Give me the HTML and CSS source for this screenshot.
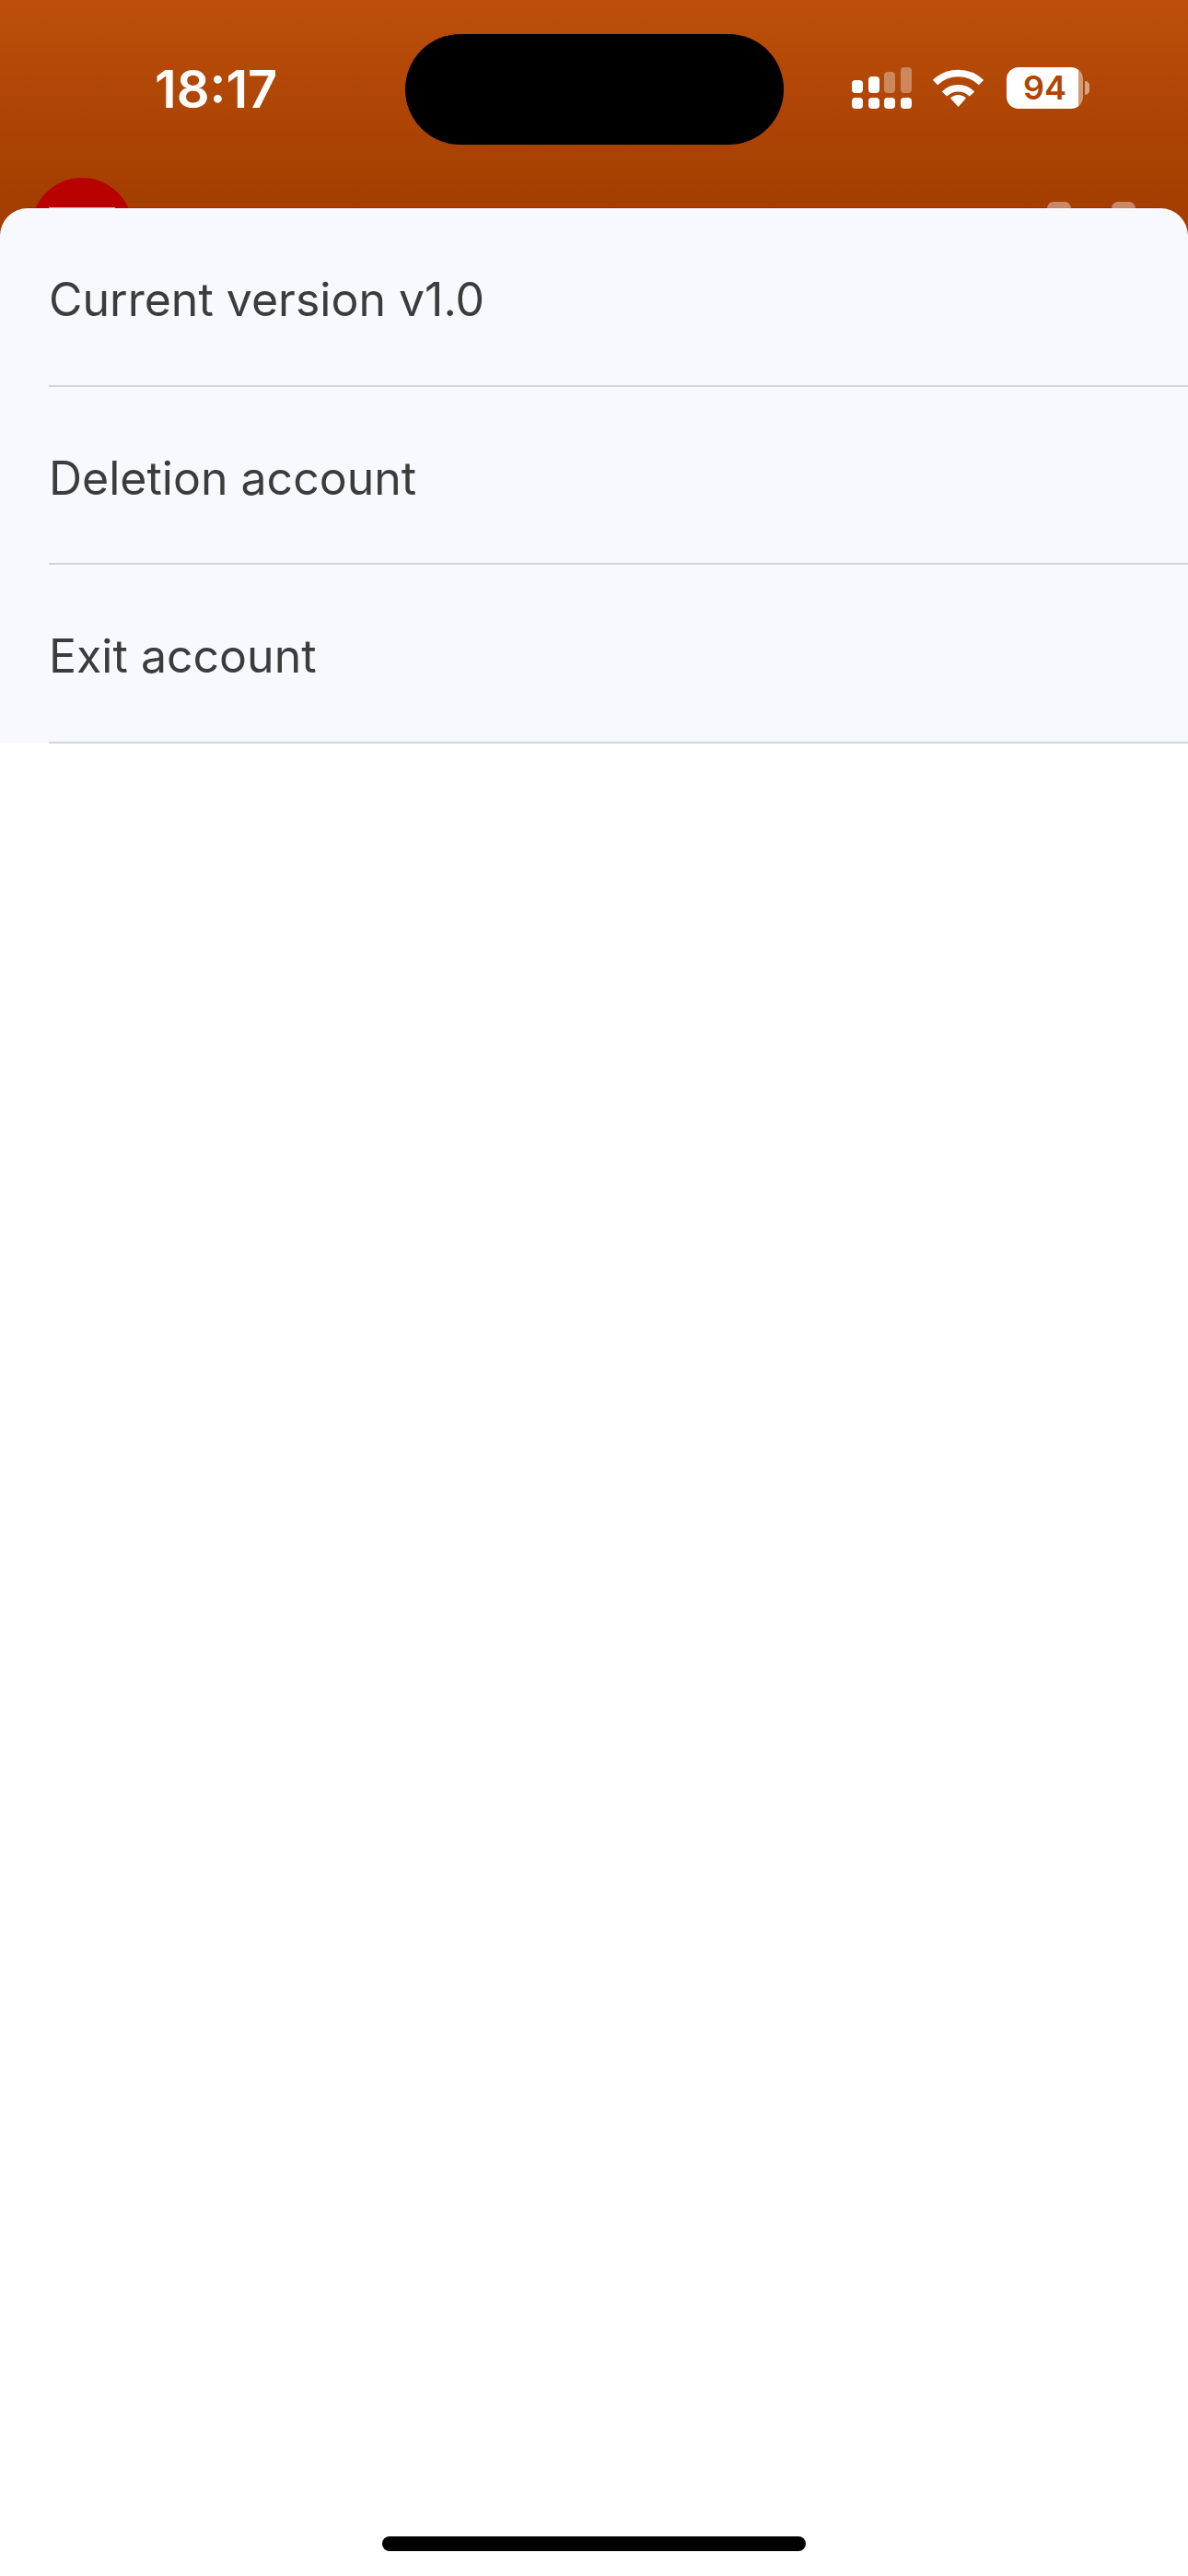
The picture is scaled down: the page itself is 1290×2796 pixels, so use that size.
FILE: index.html
```html
<!DOCTYPE html>
<html>
<head>
  <title>Settings</title>
  <link rel="stylesheet" href="styles.css">
</head>
<body>
  <div class="page">
    <div class="header">
      <div class="status">
        <div class="time">18:17</div>
        <div class="island"></div>
        <div class="icons">
          <svg class="signal" width="65" height="45" viewBox="0 0 65 45" fill="#fff">
            <rect x="0" y="14" width="12" height="14" rx="4"/>
            <rect x="18" y="10" width="12" height="18" rx="4"/>
            <rect x="35" y="5" width="12" height="23" rx="4" opacity=".35"/>
            <rect x="53" y="0" width="12" height="28" rx="4" opacity=".35"/>
            <rect x="0" y="33" width="12" height="12" rx="4"/>
            <rect x="18" y="33" width="12" height="12" rx="4"/>
            <rect x="35" y="33" width="12" height="12" rx="4"/>
            <rect x="53" y="33" width="12" height="12" rx="4"/>
          </svg>
          <svg class="wifi" width="55" height="41" viewBox="0 0 55 41">
            <path d="M2.5 14.5A36 36 0 0 1 52.5 14.5" fill="none" stroke="#fff" stroke-width="7.5"/>
            <path d="M12.5 27A21 21 0 0 1 42.5 27" fill="none" stroke="#fff" stroke-width="7.5"/>
            <path d="M27.5 41L19 31.5A12 12 0 0 1 36 31.5Z" fill="#fff"/>
          </svg>
          <div class="battery">
            <div class="battery-body">94</div>
            <div class="battery-nub"></div>
          </div>
        </div>
      </div>
      <div class="nav">
        <div class="avatar"><div class="avatar-icon"></div></div>
        <div class="nav-actions">
          <div class="nav-btn"></div>
          <div class="nav-btn"></div>
        </div>
      </div>
    </div>

    <div class="sheet">
      <div class="row">Current version v1.0</div>
      <div class="row">Deletion account</div>
      <div class="row">Exit account</div>
    </div>

    <div class="home">
      <div class="home-bar"></div>
    </div>
  </div>
</body>
</html>
```

FILE: styles.css
```css
* {
  box-sizing: border-box;
}

body {
  margin: 0;
  background-color: #fff;
  font-family: Inter, "Liberation Sans", sans-serif;
}

.page {
  display: flex;
  flex-direction: column;
  width: 1290px;
  height: 2796px;
  overflow: hidden;
}

/* runs 30px under the sheet so its round corners show orange */
.header {
  flex: none;
  height: 256px;
  margin-bottom: -30px;
  overflow: hidden;
  background:
    linear-gradient(#b3200a, #b3200a) 30px 225px / 1230px 1px no-repeat,
    linear-gradient(180deg, #bc4f0b 0, #a33d00 226px);
}

.status {
  display: flex;
  height: 157px;
  padding-top: 37px;
  padding-left: 168px;
}

.time {
  width: 272px;
  height: 120px;
  line-height: 120px;
  color: #fff;
  font-size: 56px;
  font-weight: 600;
}

.island {
  width: 411px;
  height: 120px;
  border-radius: 60px;
  background-color: #000;
}

.icons {
  display: flex;
  align-items: flex-start;
  padding-top: 36px;
  margin-left: 74px;
}

.wifi {
  margin-left: 23px;
  margin-top: 2px;
}

.battery {
  display: flex;
  align-items: center;
  margin-left: 25px;
}

.battery-body {
  width: 83px;
  height: 45px;
  border-radius: 13px;
  background: linear-gradient(90deg, #fff 94%, rgba(255, 255, 255, .45) 94%);
  color: #b04404;
  font-size: 36px;
  font-weight: 600;
  line-height: 45px;
  text-align: center;
}

.battery-nub {
  width: 5px;
  height: 15px;
  margin-left: 2px;
  border-radius: 0 8px 8px 0;
  background-color: rgba(255, 255, 255, .5);
}

.nav {
  display: flex;
  justify-content: space-between;
  padding-top: 36px;
  padding-left: 34px;
  padding-right: 57px;
}

.avatar {
  display: flex;
  justify-content: center;
  width: 110px;
  height: 110px;
  padding-top: 32px;
  border-radius: 50%;
  background-color: #b80000;
}

.avatar-icon {
  width: 72px;
  height: 40px;
  background-color: #e0b0a8;
}

.nav-actions {
  display: flex;
  gap: 44px;
  padding-top: 26px;
}

.nav-btn {
  width: 26px;
  height: 30px;
  border-radius: 7px;
  background-color: rgba(255, 255, 255, .4);
}

.sheet {
  flex: none;
  border-radius: 30px 30px 0 0;
  background-color: #f8f9ff;
}

.row {
  display: flex;
  align-items: center;
  height: 193.5px;
  margin-left: 53px;
  padding-top: 7px;
  border-bottom: 2px solid #d5d5d9;
  color: #3c3c3e;
  font-size: 50px;
}

.home {
  display: flex;
  justify-content: center;
  align-items: flex-end;
  flex: 1;
  padding-bottom: 27px;
}

.home-bar {
  width: 460px;
  height: 16px;
  border-radius: 8px;
  background-color: #000;
}
```
